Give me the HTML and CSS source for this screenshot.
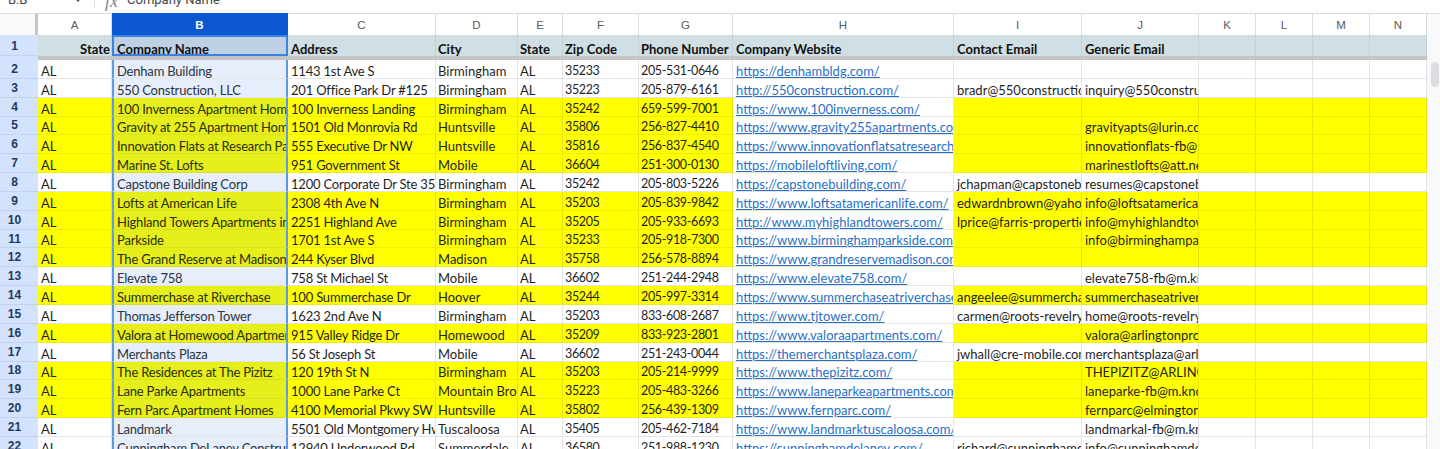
FILE: index.html
```html
<!DOCTYPE html>
<html lang="en">

<head>
    <meta charset="UTF-8">
    <meta name="viewport" content="width=device-width, initial-scale=1.0">
    <title>Apartment Leads - Sheet</title>
    <link rel="stylesheet" href="styles.css">
</head>

<body>
    <div class="formulaBar">
        <span class="nameBox">B:B</span>
        <svg class="caret" width="8" height="5" viewBox="0 0 8 5"><path d="M1 0.5h6L4 4z" fill="#444746"/></svg>
        <span class="barDivider"></span>
        <span class="fx">fx</span>
        <span class="formulaText">Company Name</span>
    </div>

    <div class="sheet">
        <table class="grid">
            <colgroup>
                <col class="w38"><col class="w74"><col class="w176"><col class="w148"><col class="w82"><col class="w45"><col class="w76"><col class="w94"><col class="w221"><col class="w128"><col class="w117"><col class="w57"><col class="w57"><col class="w57"><col class="w57">
            </colgroup>
            <thead>
                <tr class="colHeads">
                    <th class="corner"></th><th>A</th><th class="selCol">B</th><th>C</th><th>D</th><th>E</th><th>F</th><th>G</th><th>H</th><th>I</th><th>J</th><th>K</th><th>L</th><th>M</th><th>N</th>
                </tr>
            </thead>
            <tbody>
                <tr class="titles">
                    <th class="rowNum">1</th><td class="right">State</td><td class="active">Company Name</td><td>Address</td><td>City</td><td>State</td><td>Zip Code</td><td>Phone Number</td><td>Company Website</td><td>Contact Email</td><td>Generic Email</td><td></td><td></td><td></td><td></td>
                </tr>
                <tr class="freeze">
                    <th class="rowNum"></th><td colspan="14"></td>
                </tr>
                <tr>
                    <th class="rowNum">2</th><td>AL</td><td class="b">Denham Building</td><td>1143 1st Ave S</td><td>Birmingham</td><td>AL</td><td>35233</td><td>205-531-0646</td><td class="link"><a href="#">https://denhambldg.com/</a></td><td></td><td></td><td></td><td></td><td></td><td></td>
                </tr>
                <tr>
                    <th class="rowNum">3</th><td>AL</td><td class="b">550 Construction, LLC</td><td>201 Office Park Dr #125</td><td>Birmingham</td><td>AL</td><td>35223</td><td>205-879-6161</td><td class="link"><a href="#">http://550construction.com/</a></td><td>bradr@550construction.com</td><td>inquiry@550construction.com</td><td></td><td></td><td></td><td></td>
                </tr>
                <tr class="y">
                    <th class="rowNum">4</th><td>AL</td><td class="b">100 Inverness Apartment Homes</td><td>100 Inverness Landing</td><td>Birmingham</td><td>AL</td><td>35242</td><td>659-599-7001</td><td class="link"><a href="#">https://www.100inverness.com/</a></td><td></td><td></td><td></td><td></td><td></td><td></td>
                </tr>
                <tr class="y">
                    <th class="rowNum">5</th><td>AL</td><td class="b">Gravity at 255 Apartment Homes</td><td>1501 Old Monrovia Rd</td><td>Huntsville</td><td>AL</td><td>35806</td><td>256-827-4410</td><td class="link"><a href="#">https://www.gravity255apartments.com/</a></td><td></td><td>gravityapts@lurin.com</td><td></td><td></td><td></td><td></td>
                </tr>
                <tr class="y">
                    <th class="rowNum">6</th><td>AL</td><td class="b">Innovation Flats at Research Park</td><td>555 Executive Dr NW</td><td>Huntsville</td><td>AL</td><td>35816</td><td>256-837-4540</td><td class="link"><a href="#">https://www.innovationflatsatresearchpark.com/</a></td><td></td><td>innovationflats-fb@m.knck.io</td><td></td><td></td><td></td><td></td>
                </tr>
                <tr class="y">
                    <th class="rowNum">7</th><td>AL</td><td class="b">Marine St. Lofts</td><td>951 Government St</td><td>Mobile</td><td>AL</td><td>36604</td><td>251-300-0130</td><td class="link"><a href="#">https://mobileloftliving.com/</a></td><td></td><td>marinestlofts@att.net</td><td></td><td></td><td></td><td></td>
                </tr>
                <tr>
                    <th class="rowNum">8</th><td>AL</td><td class="b">Capstone Building Corp</td><td>1200 Corporate Dr Ste 350</td><td>Birmingham</td><td>AL</td><td>35242</td><td>205-803-5226</td><td class="link"><a href="#">https://capstonebuilding.com/</a></td><td>jchapman@capstonebuilding.com</td><td>resumes@capstonebuilding.com</td><td></td><td></td><td></td><td></td>
                </tr>
                <tr class="y">
                    <th class="rowNum">9</th><td>AL</td><td class="b">Lofts at American Life</td><td>2308 4th Ave N</td><td>Birmingham</td><td>AL</td><td>35203</td><td>205-839-9842</td><td class="link"><a href="#">https://www.loftsatamericanlife.com/</a></td><td>edwardnbrown@yahoo.com</td><td>info@loftsatamericanlife.com</td><td></td><td></td><td></td><td></td>
                </tr>
                <tr class="y">
                    <th class="rowNum">10</th><td>AL</td><td class="b">Highland Towers Apartments in Birmingham</td><td>2251 Highland Ave</td><td>Birmingham</td><td>AL</td><td>35205</td><td>205-933-6693</td><td class="link"><a href="#">http://www.myhighlandtowers.com/</a></td><td>lprice@farris-properties.com</td><td>info@myhighlandtowers.com</td><td></td><td></td><td></td><td></td>
                </tr>
                <tr class="y">
                    <th class="rowNum">11</th><td>AL</td><td class="b">Parkside</td><td>1701 1st Ave S</td><td>Birmingham</td><td>AL</td><td>35233</td><td>205-918-7300</td><td class="link"><a href="#">https://www.birminghamparkside.com/</a></td><td></td><td>info@birminghamparkside.com</td><td></td><td></td><td></td><td></td>
                </tr>
                <tr class="y">
                    <th class="rowNum">12</th><td>AL</td><td class="b">The Grand Reserve at Madison</td><td>244 Kyser Blvd</td><td>Madison</td><td>AL</td><td>35758</td><td>256-578-8894</td><td class="link"><a href="#">https://www.grandreservemadison.com/</a></td><td></td><td></td><td></td><td></td><td></td><td></td>
                </tr>
                <tr>
                    <th class="rowNum">13</th><td>AL</td><td class="b">Elevate 758</td><td>758 St Michael St</td><td>Mobile</td><td>AL</td><td>36602</td><td>251-244-2948</td><td class="link"><a href="#">https://www.elevate758.com/</a></td><td></td><td>elevate758-fb@m.knck.io</td><td></td><td></td><td></td><td></td>
                </tr>
                <tr class="y">
                    <th class="rowNum">14</th><td>AL</td><td class="b">Summerchase at Riverchase</td><td>100 Summerchase Dr</td><td>Hoover</td><td>AL</td><td>35244</td><td>205-997-3314</td><td class="link"><a href="#">https://www.summerchaseatriverchase.com/</a></td><td>angeelee@summerchase.com</td><td>summerchaseatriverchase@m.knck.io</td><td></td><td></td><td></td><td></td>
                </tr>
                <tr>
                    <th class="rowNum">15</th><td>AL</td><td class="b">Thomas Jefferson Tower</td><td>1623 2nd Ave N</td><td>Birmingham</td><td>AL</td><td>35203</td><td>833-608-2687</td><td class="link"><a href="#">https://www.tjtower.com/</a></td><td>carmen@roots-revelry.com</td><td>home@roots-revelry.com</td><td></td><td></td><td></td><td></td>
                </tr>
                <tr class="y">
                    <th class="rowNum">16</th><td>AL</td><td class="b">Valora at Homewood Apartments</td><td>915 Valley Ridge Dr</td><td>Homewood</td><td>AL</td><td>35209</td><td>833-923-2801</td><td class="link"><a href="#">https://www.valoraapartments.com/</a></td><td></td><td>valora@arlingtonproperties.com</td><td></td><td></td><td></td><td></td>
                </tr>
                <tr>
                    <th class="rowNum">17</th><td>AL</td><td class="b">Merchants Plaza</td><td>56 St Joseph St</td><td>Mobile</td><td>AL</td><td>36602</td><td>251-243-0044</td><td class="link"><a href="#">https://themerchantsplaza.com/</a></td><td>jwhall@cre-mobile.com</td><td>merchantsplaza@arlingtonproperties.com</td><td></td><td></td><td></td><td></td>
                </tr>
                <tr class="y">
                    <th class="rowNum">18</th><td>AL</td><td class="b">The Residences at The Pizitz</td><td>120 19th St N</td><td>Birmingham</td><td>AL</td><td>35203</td><td>205-214-9999</td><td class="link"><a href="#">https://www.thepizitz.com/</a></td><td></td><td>THEPIZITZ@ARLINGTONPROPERTIES.COM</td><td></td><td></td><td></td><td></td>
                </tr>
                <tr class="y">
                    <th class="rowNum">19</th><td>AL</td><td class="b">Lane Parke Apartments</td><td>1000 Lane Parke Ct</td><td>Mountain Brook</td><td>AL</td><td>35223</td><td>205-483-3266</td><td class="link"><a href="#">https://www.laneparkeapartments.com/</a></td><td></td><td>laneparke-fb@m.knck.io</td><td></td><td></td><td></td><td></td>
                </tr>
                <tr class="y">
                    <th class="rowNum">20</th><td>AL</td><td class="b">Fern Parc Apartment Homes</td><td>4100 Memorial Pkwy SW</td><td>Huntsville</td><td>AL</td><td>35802</td><td>256-439-1309</td><td class="link"><a href="#">https://www.fernparc.com/</a></td><td></td><td>fernparc@elmingtonpm.com</td><td></td><td></td><td></td><td></td>
                </tr>
                <tr>
                    <th class="rowNum">21</th><td>AL</td><td class="b">Landmark</td><td>5501 Old Montgomery Hwy</td><td>Tuscaloosa</td><td>AL</td><td>35405</td><td>205-462-7184</td><td class="link"><a href="#">https://www.landmarktuscaloosa.com/</a></td><td></td><td>landmarkal-fb@m.knck.io</td><td></td><td></td><td></td><td></td>
                </tr>
                <tr>
                    <th class="rowNum">22</th><td>AL</td><td class="b">Cunningham DeLaney Construction</td><td>12940 Underwood Rd</td><td>Summerdale</td><td>AL</td><td>36580</td><td>251-988-1230</td><td class="link"><a href="#">https://cunninghamdelaney.com/</a></td><td>richard@cunninghamdelaney.com</td><td>info@cunninghamdelaney.com</td><td></td><td></td><td></td><td></td>
                </tr>
            </tbody>
        </table>
        <div class="scrollTrack">
            <div class="scrollThumb"></div>
        </div>
    </div>
</body>

</html>
```

FILE: styles.css
```css
html, body {
    height: 449px;
    overflow: hidden;
}

body {
    margin: 0;
    background-color: #fff;
    font-family: Lato, "Liberation Sans", sans-serif;
    color: #1f1f1f;
}

.formulaBar {
    display: flex;
    align-items: flex-end;
    height: 13px;
    overflow: hidden;
    font-family: Roboto, sans-serif;
    font-size: 13px;
    line-height: 16px;
    color: #444746;
}

.nameBox {
    margin: 0 0 5px 8px;
    width: 66px;
}

.caret {
    margin-bottom: 10px;
}

.barDivider {
    width: 1px;
    height: 8px;
    margin: 0 10px 5px 12px;
    background: #dadce0;
}

.fx {
    width: 22px;
    margin-bottom: 4px;
    font-family: "Liberation Serif", serif;
    font-style: italic;
    font-size: 18px;
    color: #80868b;
}

.formulaText {
    margin-bottom: 5px;
}

.sheet {
    display: flex;
    width: 1440px;
}

.grid {
    width: 1427px;
    flex: none;
    table-layout: fixed;
    border-collapse: separate;
    border-spacing: 0;
    font-size: 13px;
}

.w38 { width: 38px; }
.w45 { width: 45px; }
.w57 { width: 57px; }
.w74 { width: 74px; }
.w76 { width: 76px; }
.w82 { width: 82px; }
.w94 { width: 94px; }
.w117 { width: 117px; }
.w128 { width: 128px; }
.w148 { width: 148px; }
.w176 { width: 176px; }
.w221 { width: 221px; }

.colHeads th {
    height: 22px;
    padding: 0;
    border-top: 1px solid #dadce0;
    border-right: 1px solid #dadce0;
    box-sizing: border-box;
    font-family: "Liberation Sans", sans-serif;
    font-size: 11.5px;
    font-weight: normal;
    color: #575a5c;
}

.colHeads .corner {
    background: #f8f9fa;
    border-right: 3px solid #c4c7c5;
}

.colHeads .selCol {
    background: #0b57d0;
    border-color: #0b57d0;
    color: #fff;
    font-weight: bold;
}

.rowNum {
    padding: 0 9px 0 0;
    background: #d3e3fd;
    border-bottom: 1px solid #c3d3ee;
    box-sizing: border-box;
    font-family: "Liberation Sans", sans-serif;
    font-size: 12px;
    color: #1f3a5f;
}

tbody tr {
    height: 18.85px;
}

td {
    padding: 1px 3px 0 3px;
    overflow: hidden;
    box-sizing: border-box;
    border-right: 1px solid #e3e4e4;
    border-bottom: 1px solid #e3e4e4;
    vertical-align: bottom;
    white-space: nowrap;
    line-height: 14px;
}

/* Lato runs wider than the sheet's font, so tighten these columns */
td:nth-child(3),
td:nth-child(4) {
    letter-spacing: -0.2px;
}

td:nth-child(5),
td:nth-child(6),
td:nth-child(7),
td:nth-child(8) {
    padding-left: 2px;
}

td:nth-child(7),
td:nth-child(8) {
    font-size: 12.5px;
    letter-spacing: -0.35px;
}

.y td {
    background: #ff0;
    border-right-color: #e6e600;
    border-bottom-color: #eeee00;
}

.y .link {
    background: #fff;
    border-right-color: #e3e4e4;
    border-bottom-color: #e3e4e4;
}

.b {
    background: #e6eefc;
    border-left: 2px solid #5a9ae6;
    border-right: 2px solid #5a9ae6;
    color: #2b3540;
}

.y .b {
    background: #e6ee1b;
    border-left-color: #5a9ae6;
    border-right-color: #5a9ae6;
    border-bottom-color: #d8e020;
    color: #2a3000;
}

.link a {
    color: #2a6fc4;
}

tr.titles {
    height: 21px;
}

.titles td {
    background: #d0dfe3;
    border-right-color: #c3d2d6;
    border-bottom: none;
    font-size: 13px;
    font-weight: bold;
    letter-spacing: 0;
    color: #111;
}

.titles .rowNum {
    padding-top: 2px;
}

.titles .right {
    padding-right: 1px;
    text-align: right;
}

.titles .active {
    background: #bdd1e2;
    border: 2px solid #3b82e0;
    line-height: 10px;
}

tr.freeze {
    height: 4px;
}

.freeze td {
    padding: 0;
    background: #c2c5c7;
    border: none;
    line-height: 0;
}

.freeze .rowNum {
    padding: 0;
    border: none;
    line-height: 0;
}

.scrollTrack {
    flex: 1;
    padding: 48px 1px 0 4px;
    background: #f8f9fa;
    border-top: 1px solid #dadce0;
}

.scrollThumb {
    height: 25px;
    background: #dadce0;
    border-radius: 4px;
}
```
